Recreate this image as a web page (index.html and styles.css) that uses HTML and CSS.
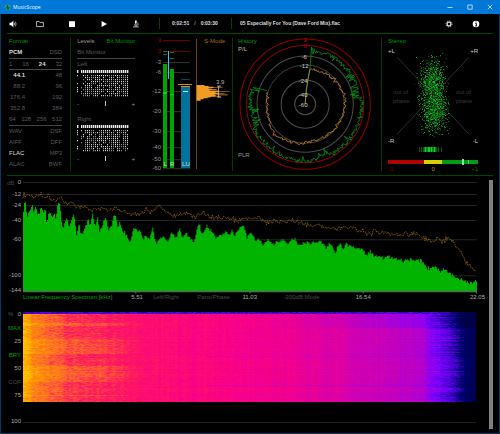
FILE: index.html
```html
<!DOCTYPE html>
<html lang="en">
<head>
<meta charset="utf-8">
<title>MusicScope</title>
<link rel="stylesheet" href="styles.css">
</head>
<body>
<div class="window">
  <header class="titlebar">
    <svg class="logo" viewBox="0 0 8 8"><circle cx="4" cy="4" r="3.5" fill="#2d9b86"/><path d="M1.5 5 3 4.5 4 1.5 4.4 6.5 5.6 3.5 6.5 4" fill="none" stroke="#053a3c" stroke-width=".8"/></svg>
    <h1>MusicScope</h1>
    <button class="winbtn" aria-label="Minimize"><svg viewBox="0 0 6 6"><path d="M.5 3.5h5"/></svg></button>
    <button class="winbtn" aria-label="Maximize"><svg viewBox="0 0 6 6"><path d="M.8 1h4.4v4.2H.8z"/></svg></button>
    <button class="winbtn" aria-label="Close"><svg viewBox="0 0 6 6"><path d="M.8.8l4.4 4.4M5.2.8.8 5.2"/></svg></button>
  </header>

  <div class="toolbar">
    <button class="tool tool-first" aria-label="Volume"><svg viewBox="0 0 8 8"><path d="M.5 2.8H2L4.4.8v6.4L2 5.2H.5z" fill="#fff"/><path d="M5.2 2.6q.9 1.4 0 2.8M6.3 1.6q1.8 2.4 0 4.8" fill="none" stroke="#ddd" stroke-width=".7"/></svg></button>
    <button class="tool" aria-label="Open"><svg viewBox="0 0 8 8"><path d="M.6 6.6V1.4h2.5l.7 1h3.6v4.2z" fill="none" stroke="#ddd" stroke-width=".8"/></svg></button>
    <button class="tool" aria-label="Stop"><svg viewBox="0 0 8 8"><path d="M1 1.2h6v5.8H1z" fill="#fff"/></svg></button>
    <button class="tool" aria-label="Play"><svg viewBox="0 0 8 8"><path d="M1.6 1 7 4 1.6 7z" fill="#fff"/></svg></button>
    <button class="tool" aria-label="Analyze"><svg viewBox="0 0 8 8"><path d="M3.2.6 4.8.6 4.4 3.8 2.8 3.6z" fill="#fff"/><path d="M4.9 2.3q2 1.3.8 3.3M2 4.9h3M1.2 6.9h5.6M4 5v1.8" fill="none" stroke="#ddd" stroke-width=".8"/></svg></button>
    <div class="time"><span>0:02:51</span><span class="slash">/</span><span>0:03:30</span></div>
    <div class="track">05 Especially For You (Dave Ford Mix).flac</div>
    <button class="tool tool-end" aria-label="Settings"><svg viewBox="0 0 8 8"><circle cx="4" cy="4" r="1.9" fill="none" stroke="#ddd" stroke-width="1.2"/><circle cx="4" cy="4" r="3" fill="none" stroke="#ccc" stroke-width="1" stroke-dasharray="1.18"/></svg></button>
    <button class="tool tool-end" aria-label="Info"><svg viewBox="0 0 8 8"><circle cx="4" cy="4" r="3.3" fill="#fff"/><path d="M3.2 3.4h1.2v2.4M3.1 5.9h2M3.6 1.9h1" stroke="#000" stroke-width=".9" fill="none"/></svg></button>
  </div>

  <main>
    <div class="panels">
      <section class="format">
        <h2>Format</h2>
        <div class="row ruled"><span class="on strong">PCM</span><span>DSD</span></div>
        <div class="row ruled tight"><span>1</span><span>16</span><span class="on strong">24</span><span>32</span></div>
        <div class="row rates"><span class="on strong">44.1</span><span>48</span></div>
        <div class="row rates"><span>88.2</span><span>96</span></div>
        <div class="row rates"><span>176.4</span><span>192</span></div>
        <div class="row rates"><span>352.8</span><span>384</span></div>
        <div class="row ruled"><span>64</span><span>128</span><span>256</span><span>512</span></div>
        <div class="row"><span>WAV</span><span>DSF</span></div>
        <div class="row"><span>AIFF</span><span>DFF</span></div>
        <div class="row"><span class="on">FLAC</span><span>MP3</span></div>
        <div class="row"><span>ALAC</span><span>BWF</span></div>
      </section>

      <section class="levels divided">
        <div class="row"><button class="tab">Levels</button><button class="tab active">Bit Monitor</button></div>
        <div class="row ruled"><span>Bit Monitor</span></div>
        <div class="row"><span>Left</span></div>
        <svg class="bits" viewBox="0 0 54 29" preserveAspectRatio="none"><g id="bits-left"></g></svg>
        <div class="balance"><span>-</span><i></i><span>+</span></div>
        <div class="row"><span>Right</span></div>
        <svg class="bits" viewBox="0 0 54 29" preserveAspectRatio="none"><g id="bits-right"></g></svg>
        <div class="balance"><span>-</span><i></i><span>+</span></div>
      </section>

      <section>
        <svg class="chart" viewBox="152 36 80 134">
          <g id="meter-grid" text-anchor="end"></g>
          <g shape-rendering="crispEdges">
            <path d="M163 64h4v104h-4zM170 69h4v99h-4z" fill="#00a400"/>
            <path d="M163 92h4v2h-4zM170 94h4v1h-4z" fill="#00e000"/>
            <path d="M163 51h4v1h-4zM163 54h4v1h-4zM170 52h4v1h-4zM170 58h4v1h-4z" fill="#00803a"/>
            <path d="M168 51h1v28h-1z" fill="#44bdf0"/>
            <path d="M181 86h9v82h-9z" fill="#00709c"/>
            <path d="M181 79h9v1h-9z" fill="#004668"/>
            <path d="M178 84h14v1h-14zM181 86h9v1h-9z" fill="#d58a1c"/>
            <path d="M183 91h5v1h-5z" fill="#bde4f5"/>
            <path d="M196 39h1v130h-1z" fill="#6b4407"/>
          </g>
          <path d="M196.500 85h8v1h4v.7h5v.6h9v.5h-14v.7h3v.7h5v.6h-7v.7h9v.8h11v.6h-14v.7h3v.7h6v.5h-10v.7h13v.6h-12v1h5v.6h-10v.8h-3v.7h-4v1h-3v1.500h-4z" fill="#f09c20"/>
          <path d="M217 86h4M217 97h4M218.500 86v11" stroke="#ccc" fill="none" stroke-width=".8"/>
          <g class="bar-label"><text x="163.500" y="166">L</text><text x="170" y="166">R</text><text x="182" y="166">LU</text></g>
          <text x="216" y="84" fill="#bbb">3.9</text>
          <text x="204" y="43" fill="#a86c12">S-Mode</text>
        </svg>
      </section>

      <section class="divided">
        <svg class="chart" viewBox="233 36 148 134">
          <g fill="none" stroke="#4d4d4d"><circle cx="306" cy="104" r="48"/><circle cx="306" cy="104" r="39" stroke="#3c3c3c"/><circle cx="306" cy="104" r="24"/><circle cx="306" cy="104" r="10.500"/></g>
          <g fill="none" stroke="#8e0000"><circle cx="306" cy="104" r="65"/><circle cx="306" cy="104" r="58.500"/></g>
          <path id="trace-peak" fill="none" stroke="#009416" stroke-width=".8"/>
          <path id="trace-loud" fill="none" stroke="#b87a20" stroke-width=".9"/>
          <g text-anchor="middle" fill="#ccc"><text x="306" y="42" fill="#c00000">3</text><text x="306" y="48" fill="#c00000">0</text><text x="305" y="59">-6</text><text x="305" y="68">-12</text><text x="304" y="83">-24</text><text x="304" y="97">-40</text><text x="304" y="107">-60</text></g>
          <text x="239" y="43" class="title">History</text>
          <text x="239" y="51" fill="#bbb">P/L</text>
          <text x="239" y="157" fill="#999">PLR</text>
        </svg>
      </section>

      <section class="divided">
        <svg class="chart" viewBox="381 36 111 134">
          <path d="M397 57l71 76M468 57l-71 76" stroke="#333" stroke-width=".9"/>
          <g id="cloud" shape-rendering="crispEdges"></g>
          <g shape-rendering="crispEdges">
            <path d="M388 159h36v4h-36z" fill="#b00000"/><path d="M424 159h17v4h-17z" fill="#d8d000"/><path d="M441 159h36v4h-36z" fill="#009c18"/>
            <path d="M461 158h2v6h-2z" fill="#8fe09a"/><path d="M467 159h1v4h-1z" fill="#5ac56a"/>
            <path d="M419 146h1v5h-1zM421 146h1v5h-1zM423 146h1v5h-1zM435 146h1v5h-1zM437 146h1v5h-1zM440 146h1v5h-1z" fill="#00590c"/>
            <path d="M424 146h11v5h-11z" fill="#008a14"/><path d="M425 146h1v5h-1zM427 146h2v5h-2zM430 146h1v5h-1zM433 146h1v5h-1z" fill="#08d028"/>
          </g>
          <text x="388" y="43" class="title">Stereo</text>
          <g fill="#ccc"><text x="388" y="53">+L</text><text x="388" y="142">-R</text><text x="477" y="53" text-anchor="end">+R</text><text x="477" y="142" text-anchor="end">-L</text></g>
          <g fill="#383838"><text x="393" y="93">out of</text><text x="393" y="102">phase</text><text x="455" y="93">out of</text><text x="455" y="102">phase</text></g>
          <text x="388" y="170" fill="#900000">-1</text><text x="431" y="170" fill="#a8a000">0</text><text x="477" y="170" text-anchor="end" fill="#007010">+1</text>
        </svg>
      </section>
    </div>

    <div class="analysis">
      <div class="plots">
        <svg class="chart" viewBox="7 178 481 113">
          <g id="db-grid" text-anchor="end"></g>
          <path id="spectrum" fill="#00b400"/>
          <path id="spectrum-max" fill="none" stroke="#97690c" stroke-width=".8" stroke-dasharray="1.500 .8"/>
          <path d="M23 291.500h453M135.500 291v2M249.500 291v2M362.500 291v2M475.500 291v2" stroke="#777" fill="none"/>
          <text x="7" y="185" fill="#444">dB</text>
        </svg>
        <div class="scale">
          <button class="link green">Linear Frequency Spectrum [kHz]</button><span>5.51</span>
          <button class="link">Left/Right</button><button class="link">Pans/Phase</button><span>11.03</span>
          <button class="link">-200dB Mode</button><span>16.54</span><span>22.05</span>
        </div>
        <div class="waterfall">
          <div class="percent">
            <div class="first"><span>%</span><span>0</span></div>
            <button class="link green">MAX</button><span>25</span>
            <button class="link green">BRY</button><span>50</span>
            <button class="link">COF</button><span>75</span><span></span><span>100</span>
          </div>
          <div class="heat"><canvas id="heat" width="226" height="90"></canvas></div>
        </div>
      </div>
      <div class="scrollbar"></div>
    </div>
  </main>
</div>
<script src="scope.js"></script>
</body>
</html>
```
FILE: styles.css
```css
* { box-sizing: border-box; }
body { margin: 0; background: #000; font-family: "Liberation Sans", Arial, sans-serif; font-size: 6px; line-height: 11px; color: #5a5a5a; }
h1, h2 { margin: 0; font-size: 6px; }
button { padding: 0; border: 0; background: none; font: inherit; color: inherit; cursor: pointer; text-align: left; white-space: nowrap; }
svg { display: block; overflow: visible; }

.window { min-height: 100vh; display: flex; flex-direction: column; border: 1px solid #05395f; border-top: 0; }

.titlebar { display: flex; align-items: center; height: 14px; background: #0078d7; margin: 0 -1px; padding-left: 4px; }
.logo { width: 7px; height: 7px; margin-right: 2px; }
.titlebar h1 { flex: 1; font-family: "Open Sans", sans-serif; font-weight: 400; font-size: 5px; color: #f2f8fe; }
.winbtn { width: 20px; height: 14px; }
.winbtn svg { width: 6px; height: 6px; margin: 0 auto; fill: none; stroke: #d6e9fa; stroke-width: .8; }

.toolbar { display: flex; align-items: center; height: 20px; margin: 0 6px; border-bottom: 1px solid #004a00; color: #ddd; }
.tool { width: 32px; }
.tool svg { width: 8px; height: 8px; margin: 0 auto; }
.tool-first { width: 17px; }
.tool-first svg { margin-left: 2px; }
.tool-end { width: 27px; }
.tool-end:last-child { margin-right: 4px; }
.time, .track { border-left: 1px solid #004400; white-space: nowrap; font-weight: 700; font-size: 5px; }
.time { width: 72px; margin-left: 7px; padding-left: 12px; display: flex; gap: 5px; }
.slash { color: #999; }
.track { flex: 1; padding-left: 8px; }

main { flex: 1; display: flex; flex-direction: column; padding: 2px 6px 0; }
.panels { display: grid; grid-template-columns: 63fr 82fr 80fr 148fr 112fr; padding-bottom: 4px; border-bottom: 1px solid #004a00; }
.divided { background: linear-gradient(#003c00, #003c00) 0 2px / 1px 100% no-repeat; }
.chart { width: 100%; height: auto; }
.chart text { font-size: 6px; }
.title, .format h2 { fill: #009800; color: #009800; font-weight: 400; }
.bar-label { fill: #c8e6c8; }

.format { padding: 0 8px 0 2px; }
.row { display: flex; justify-content: space-between; height: 11px; }
.ruled { height: 12px; border-bottom: 1px solid #444; }
.tight { height: 11px; }
.rates { display: grid; grid-template-columns: 16px 1fr; text-align: right; }
.on { color: #ddd; }
.strong { font-weight: 700; }

.levels { padding: 0 17px 0 7px; }
.tab { line-height: 11px; color: #999; }
.tab.active { color: #009800; }
.bits { width: 54px; height: 29px; }
.balance { display: flex; justify-content: space-between; align-items: center; width: 58px; height: 15px; line-height: 6px; padding-bottom: 6px; color: #999; }
.balance i { width: 1px; height: 5px; background: #bbb; }

.analysis { flex: 1; display: flex; padding-top: 2px; }
.plots { flex: 1; min-width: 0; }
.scrollbar { width: 4px; margin: 2px 0 4px; background: #808080; }
.scale { display: grid; grid-template-columns: 108fr 22fr 44fr 45fr 41fr 72fr 114fr 19fr; height: 10px; padding-left: 16px; line-height: 10px; color: #aaa; }
.link { color: #4a4a4a; line-height: 8px; }
.link.green { color: #00a000; }
.waterfall { display: flex; margin-top: 6px; }
.percent { width: 16px; padding-right: 2px; display: grid; grid-template-rows: repeat(9, 1fr); height: 121px; align-items: center; text-align: right; color: #aaa; }
.percent .link { text-align: right; }
.first { display: flex; justify-content: space-between; padding-left: 1px; }
.first span:first-child { color: #555; }
.heat { flex: 1; margin: 4px 13px 6px 0; border-bottom: 1px solid #1c1c1c; }
.heat canvas { display: block; width: 100%; height: 90px; }
```
FILE: scope.js
```js
let seed = 7;
function rnd() {
  seed = (seed * 1664525 + 1013904223) % 4294967296;
  return seed / 4294967296;
}
const el = id => document.getElementById(id);
const gauss = () => rnd() + rnd() + rnd() - 1.5;

function lerp(points, x) {
  let i = 1;
  while (i < points.length - 1 && points[i][0] < x) i++;
  const [x0, y0] = points[i - 1], [x1, y1] = points[i];
  return y0 + (y1 - y0) * Math.max(0, Math.min(1, (x - x0) / (x1 - x0)));
}
function pairs(text) {
  const n = text.trim().split(/[\s,]+/).map(Number), out = [];
  for (let i = 0; i < n.length; i += 2) out.push([n[i], n[i + 1]]);
  return out;
}

// Bit monitor: one header strip of cells and the bit columns below it
function bits(id) {
  let head = '', hi = '', lo = '';
  for (let c = 0; c < 26; c++) {
    if (c === 1) continue;
    const x = c * 2;
    head += `M${x} 0h1.4v3h-1.4z`;
    const bright = c % 7 === 5 || c % 5 === 0;
    for (let r = 0; r < 11; r++) {
      if (rnd() < (c < 4 ? .45 : .85)) {
        const d = `M${x} ${5 + r * 2}h1v1.3h-1z`;
        if (bright || rnd() < .3) hi += d; else lo += d;
      }
    }
  }
  el(id).innerHTML = `<path d="${head}" fill="#e8e8e8"/><path d="${hi}" fill="#d0d0d0"/><path d="${lo}" fill="#8a8a8a"/>`;
}
bits('bits-left');
bits('bits-right');

// Level meter scale
el('meter-grid').innerHTML = [[3, 40], [0, 51], [-3, 62], [-6, 72], [-12, 91], [-20, 111], [-30, 131], [-40, 147], [-50, 159], [-60, 168]]
  .map(([v, y]) => `<path d="M163 ${y + .5}h27" stroke="${v >= 0 ? '#700000' : '#333'}"/><text x="161" y="${y + 2}" fill="${v >= 0 ? '#b00000' : '#999'}">${v}</text>`).join('');

// History traces, clockwise from twelve o'clock
function polar(deg, r) {
  const a = deg * Math.PI / 180;
  return `${(306 + r * Math.sin(a)).toFixed(1)} ${(104 - r * Math.cos(a)).toFixed(1)}`;
}
let peak = 'M306 104L307 90L311 66L312.500 47', loud = 'M306 104L307 92L309 78L311 69';
for (let d = 7; d < 290; d += .9) {
  const busy = d < 85 || (d > 155 && d < 168) || d > 245;
  let r = (busy ? 55 : 56.5) + gauss() * 2.5;
  if (rnd() < (busy ? .3 : .1)) r -= rnd() * (busy ? 7 : 3);
  if (rnd() < .02 && busy) r -= 8;
  peak += 'L' + polar(d, Math.min(r, 58.5));
}
const loudRadius = [[0, 37], [25, 35], [45, 38], [90, 40], [135, 38], [180, 38], [225, 43], [245, 39], [270, 38], [290, 40]];
for (let d = 10; d < 290; d += 2) loud += 'L' + polar(d, lerp(loudRadius, d) + gauss() * 1.8);
el('trace-peak').setAttribute('d', peak);
el('trace-loud').setAttribute('d', loud);

// Stereo goniometer
el('cloud').innerHTML = ['#003c06', '#005c0a', '#008a12', '#10b828'].map((color, i) => {
  let d = '';
  for (let k = 0; k < [650, 600, 380, 110][i]; k++) {
    const low = rnd() < .5;
    const x = 432.5 + gauss() * 12 + (low ? 1 : -1);
    const y = (low ? 109 : 80) + gauss() * 20;
    d += `M${Math.round(x)} ${Math.round(y)}h1v1h-1z`;
  }
  return `<path d="${d}" fill="${color}"/>`;
}).join('');

// Frequency spectrum, in thirds of a unit
el('db-grid').innerHTML = [[0, 182], [-12, 194], [-24, 205], [-40, 220], [-60, 239], [-100, 275], [-144, 290]]
  .map(([v, y]) => `<path d="M23 ${y + .5}h453" stroke="#242424"/><text x="21" y="${y + 2}" fill="#aaa">${v}</text>`).join('');
const level = pairs(`68,130 72,95 76,92 80,145 84,120 90,112 95,92 100,120 106,100 110,118 116,130 124,97 128,125 134,104 139,158
 144,128 150,120 156,138 160,120 166,138 172,100 178,90 182,140 187,170 193,155 199,132 206,170 212,145 220,125 228,188 236,155
 240,185 248,180 256,160 262,138 268,165 276,125 284,160 291,135 297,178 305,160 316,140 324,172 332,160 340,130 346,130 352,170
 358,148 366,175 376,187 388,210 400,165 410,178 416,172 428,202 436,188 446,200 456,168 466,217 476,200 490,192 500,212 514,180
 526,200 536,165 544,195 556,185 566,195 580,210 590,165 596,157 604,190 618,163 632,175 644,195 658,190 676,182 688,190 692,168
 700,190 716,168 728,160 738,200 748,182 765,205 775,200 785,220 800,205 815,215 830,210 848,200 858,215 870,205 882,200 894,220
 910,210 930,212 958,205 975,230 988,210 1002,240 1016,212 1025,235 1035,215 1050,222 1070,230 1085,235 1095,250 1107,235
 1115,250 1130,250 1145,258 1160,252 1180,260 1200,266 1220,262 1250,265 1260,262 1270,280 1285,290 1302,280 1315,300 1330,290
 1350,305 1368,320 1385,325 1405,335 1418,328 1426,328`);
const maxLevel = pairs(`68,80 72,60 78,78 90,68 110,75 124,65 135,78 150,75 160,88 180,78 200,92 215,88 230,108 255,105 270,112
 290,105 315,108 325,115 345,105 365,118 400,128 425,122 440,112 455,120 478,100 495,120 530,132 560,120 585,133 605,120 640,135
 680,138 710,145 730,138 750,142 775,136 795,150 820,145 845,152 870,145 900,152 925,160 950,158 975,168 1020,168 1045,165
 1070,172 1090,178 1112,185 1122,168 1135,185 1160,182 1180,188 1210,188 1245,185 1280,205 1300,208 1312,195 1325,210 1345,200
 1360,215 1380,240 1395,270 1410,285 1426,295`);
let area = 'M23 291', line = '';
for (let x = 23; x < 476; x++) {
  const y = 172 + (lerp(level, x * 3) + gauss() * 6) / 3;
  area += `V${y.toFixed(1)}H${x + 1}`;
  line += `${line ? 'L' : 'M'}${x} ${(172 + (lerp(maxLevel, x * 3) + gauss() * 9) / 3).toFixed(1)}`;
}
el('spectrum').setAttribute('d', area + 'V291z');
el('spectrum-max').setAttribute('d', line);

// Spectrogram
const ramp = [[0, 0, 0, 70], [.1, 0, 0, 110], [.22, 80, 0, 220], [.32, 130, 0, 255], [.45, 196, 0, 190], [.58, 250, 0, 135],
  [.68, 255, 25, 95], [.8, 255, 110, 40], [.9, 255, 150, 0], [1, 255, 195, 0]];
const energy = [[0, .97], [3, .97], [8, .87], [16, .84], [30, .78], [50, .73], [95, .69], [115, .64], [220, .575], [270, .55],
  [330, .49], [397, .42], [404, .35], [418, .27], [428, .21], [436, .12], [442, .07], [452, .03]];
const spread = [[0, .07], [60, .06], [120, .03], [390, .02], [405, .04], [430, .05], [442, .01]];
const canvas = el('heat'), ctx = canvas.getContext('2d');
const image = ctx.createImageData(226, 90);
const columns = Array.from({ length: 226 }, () => gauss() * .022);
for (let y = 0; y < 90; y++) {
  const row = gauss() * .035, dark = y === 44 || y === 73 ? -.06 : 0;
  const band = (y > 10 && y < 14) || (y > 26 && y < 42) || (y > 53 && y < 70) || y === 83 ? .04 : -.015;
  for (let x = 0; x < 226; x++) {
    const px = x * 2;
    let v = lerp(energy, px) + columns[x] * (px > 436 ? .2 : 1) + gauss() * lerp(spread, px) + row * (px > 404 && px < 440 ? 1.6 : .5);
    v += band * Math.max(0, Math.min(1, (125 - px) / 40));
    if (px > 180) v += dark;
    if (px > 230 && y < 16) v -= (px - 230) / 2600;
    if (y < 2) v = Math.min(v, .14 + rnd() * .14);
    v = Math.max(0, Math.min(1, v));
    const o = (y * 226 + x) * 4;
    for (let c = 0; c < 3; c++) image.data[o + c] = lerp(ramp.map(s => [s[0], s[c + 1]]), v);
    image.data[o + 3] = 255;
  }
}
ctx.putImageData(image, 0, 0);
```
